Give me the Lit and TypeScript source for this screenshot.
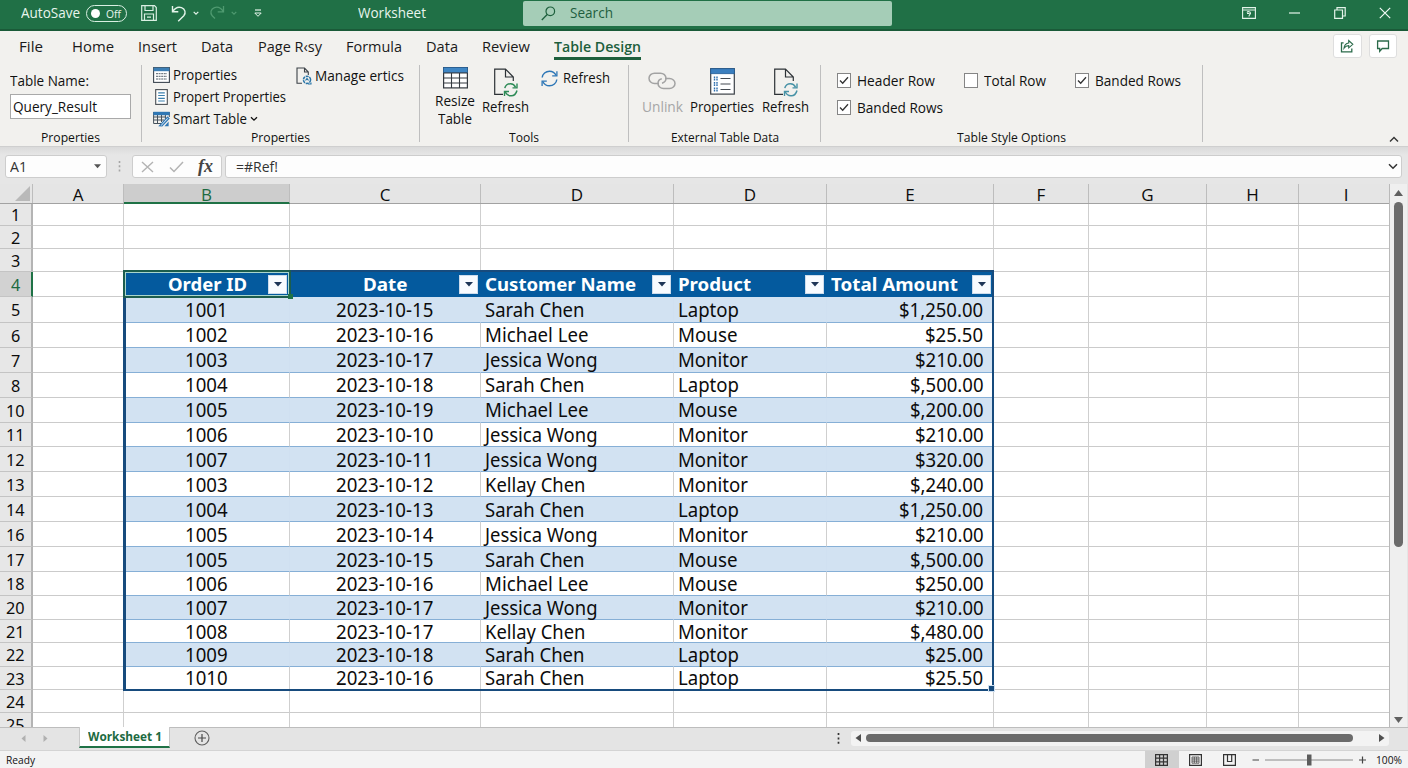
import { LitElement, html, css, svg, nothing } from "lit";
import { customElement, property, query } from "lit/decorators.js";

/** Text run condensed or widened to occupy a given width. */
@customElement("fit-text")
class FitText extends LitElement {
  @property({ type: Number }) w = 0;
  @query("span") span!: HTMLSpanElement;
  static styles = css`
    :host { display: inline-block; white-space: pre; line-height: inherit; }
    span { display: inline-block; transform-origin: 0 50%; }
  `;
  render() { return html`<span><slot></slot></span>`; }
  firstUpdated() {
    const natural = this.span.getBoundingClientRect().width;
    this.style.width = `${this.w}px`;
    this.span.style.transform = `scaleX(${this.w / natural})`;
  }
}

const t = (text: string, w: number) => html`<fit-text .w=${w}>${text}</fit-text>`;

const icon = (w: number, h: number, body: unknown, cls = "") =>
  html`<svg class="ico ${cls}" width=${w} height=${h} viewBox="0 0 ${w} ${h}" fill="none">${body}</svg>`;

const chevron = (cls = "") => icon(8, 6, svg`<path d="M1 1.2L4 4.2L7 1.2" stroke="currentColor" stroke-width="1.3"/>`, cls);
const triDown = () => icon(8, 5, svg`<path d="M0 0H8L4 4.6Z" fill="#1d3557"/>`);

const saveIcon = icon(16, 16, svg`<path d="M.7 .7H13.5L15.3 2.5V15.3H.7Z M4 .7V5.5H12V.7 M3.5 15V9H12.5V15 M6 12.2H10" stroke="#d9efe2" stroke-width="1.2"/>`);
const undoIcon = icon(16, 17, svg`<path d="M1.5 1V6.8H7.3 M1.8 6.5C4 3 7.500 1.600 10.500 2.600C14.200 4 15.200 8 12.800 10.800L7.200 16.200" stroke="#e4f4ea" stroke-width="1.4"/>`);
const redoIcon = icon(16, 17, svg`<path d="M14.5 1V6.8H8.700 M14.200 6.500C12 3 8.500 1.600 5.500 2.600C1.800 4 .8 8 3.200 10.800L6 13.500" stroke="#4f9a70" stroke-width="1.3"/>`);
const qatIcon = icon(8, 8, svg`<path d="M1 1H7" stroke="#e4f4ea" stroke-width="1.2"/><path d="M.8 4H7.200L4 7.300Z" stroke="#e4f4ea" stroke-width="1"/>`);
const searchIcon = icon(15, 15, svg`<circle cx="9.300" cy="5.300" r="4.300" stroke="#1d5f3c" stroke-width="1.200"/><path d="M6.200 8.500L.8 14" stroke="#1d5f3c" stroke-width="1.300"/>`);

const displayIcon = icon(14, 12, svg`<path d="M.6 .6H13.400V11.400H.6Z M.6 3H13.400" stroke="#e4f4ea" stroke-width="1.100"/><path d="M5 5.500C5.500 4.300 8.500 4.300 8.500 6.200C8.500 7.500 7 7.300 7 9.500 M5 6.500H7.500" stroke="#e4f4ea" stroke-width="1.100"/>`);
const minIcon = icon(11, 2, svg`<path d="M0 1H11" stroke="#e4f4ea" stroke-width="1.200"/>`);
const restoreIcon = icon(12, 12, svg`<path d="M.7 3H8.500V11.300H.7Z M3 3V.7H11.200V9H8.700" stroke="#e4f4ea" stroke-width="1.200"/>`);
const closeIcon = icon(12, 12, svg`<path d="M.8 .8L11.200 11.200M11.200 .8L.8 11.200" stroke="#f2faf5" stroke-width="1.200"/>`);

const shareIcon = icon(14, 14, svg`<path d="M3.600 3.800H1.500V12.800H11.800V9.500" stroke="#2b6b4a" stroke-width="1.300"/><path d="M4 9.200C4.300 6 6 4.300 8.700 4V1.600L12.800 5.300L8.700 8.800V6.600C6.800 6.600 5.300 7.300 4 9.200Z" stroke="#2b6b4a" stroke-width="1.100"/>`);
const commentIcon = icon(14, 14, svg`<path d="M1.600 2H12.500V9.500H6.200L3.700 12.300V9.500H1.600Z" stroke="#2b6b4a" stroke-width="1.300"/>`);

const listIcon = icon(17, 16, svg`<rect x=".6" y=".6" width="15.800" height="14.800" fill="#fff" stroke="#3c4650" stroke-width="1.100"/><rect x=".6" y=".6" width="15.800" height="3.600" fill="#3d7fb5"/><path d="M3 6.700H14 M3 9.300H14 M3 12H14" stroke="#55606a" stroke-width="1" stroke-dasharray="2 .6"/>`);
const docIcon = icon(13, 16, svg`<rect x=".7" y=".6" width="11.600" height="14.800" fill="#fff" stroke="#4a4f54" stroke-width="1.100"/><path d="M3.200 3.800H9.800 M3.200 6.500H9.800 M3.200 9.300H9.800 M3.200 12H9.800" stroke="#3c80ad" stroke-width="1.200"/>`);
const smartIcon = icon(17, 16, svg`<path d="M.6 1V12.500H8 M.6 6H13 M.6 9H11 M4.500 4V12 M8.500 4V11 M12.400 4V8 M16.300 1V6" stroke="#46525c" stroke-width="1"/><rect x=".3" y=".8" width="16.400" height="3.400" fill="#2f77b4"/><path d="M6.500 14.800L14.500 6.200L16 7.500L9 15Z" fill="#e8f2fa" stroke="#2f77b4" stroke-width="1.200"/><path d="M11.500 15.200L15.600 10.500V15.200Z" fill="#2f77b4"/>`);
const manageIcon = icon(16, 18, svg`<path d="M6 16.300H1V1H8.500L12.300 5V8 M8.500 1V5H12.300" stroke="#3c4248" stroke-width="1.100"/><circle cx="11" cy="12.800" r="3.600" stroke="#2a76a8" stroke-width="1.500" stroke-dasharray="3 .8"/><path d="M9.500 13.500L11 11.500L12.500 13.500M15 15.500V17H12" stroke="#2a76a8" stroke-width="1.100"/>`);
const gridIcon = icon(25, 22, svg`<rect x=".6" y=".6" width="23.800" height="20.300" fill="#fff" stroke="#343a40" stroke-width="1.200"/><rect x=".6" y=".6" width="23.800" height="5" fill="#3f86c4" stroke="#2a6399" stroke-width=".8"/><path d="M.6 6H24.400 M.6 11H24.400 M.6 16H24.400 M8.500 6V21 M16.500 6V21" stroke="#343a40" stroke-width="1.100"/>`);
const pageRefresh = (c: string, c2: string) => icon(26, 29, svg`<path d="M11 26.300H2.700V1.200H13.500L21.300 9V13 M13.500 1.200V9H21.300" stroke="#2d3236" stroke-width="1.200"/><path d="M12.800 20.200C13.300 17.500 15.800 15.700 18.500 15.800C21 15.900 22.700 17.500 23.600 19.300" stroke=${c} stroke-width="1.500"/><path d="M25 15.500V19.900H20.500" stroke=${c} stroke-width="1.400"/><path d="M25 22.500C24 26 21.500 28 18.800 27.800C16.300 27.700 14.300 26 13.300 24" stroke=${c2} stroke-width="1.500"/><path d="M12.500 28V23.500H17" stroke=${c2} stroke-width="1.400"/>`);
const refreshIcon = icon(17, 17, svg`<path d="M1.200 7.500C1.500 3.800 4.800 1.200 8.500 1.200C11.500 1.200 14 3 15.200 5.500" stroke="#2c76b6" stroke-width="1.400"/><path d="M15.900 1.200V5.900H11.200" stroke="#2c76b6" stroke-width="1.300"/><path d="M15.800 9.500C15.500 13.200 12.200 15.800 8.500 15.800C5.500 15.800 3 14 1.800 11.500" stroke="#2c76b6" stroke-width="1.400"/><path d="M1.100 15.900V11.100H5.800" stroke="#2c76b6" stroke-width="1.300"/>`);
const unlinkIcon = icon(28, 18, svg`<path d="M11 11.500H6.500C3.500 11.500 1 9.300 1 6.300C1 3.400 3.500 1.200 6.500 1.200H12.500C15.500 1.200 18 3.400 18 6.300C18 8.500 16.500 10.500 14 11.200" stroke="#a3a3a3" stroke-width="1.500"/><path d="M17 6.500H21.500C24.500 6.500 27 8.700 27 11.500C27 14.300 24.500 16.500 21.500 16.500H15.500C12.500 16.500 10 14.300 10 11.500C10 9.300 11.500 7.200 13.800 6.700" stroke="#a3a3a3" stroke-width="1.500"/>`);
const propsIcon = icon(25, 27, svg`<rect x=".7" y=".7" width="23.600" height="25.400" fill="#fff" stroke="#3b4147" stroke-width="1.200"/><rect x=".7" y=".7" width="23.600" height="5" fill="#3b7fbf" stroke="#265f96" stroke-width=".8"/><path d="M10.500 10.500H20.500 M10.500 16H20.500 M10.500 21.500H20.500" stroke="#444b52" stroke-width="1.200"/><path d="M4.500 8.500V12.500 M7 8.500V12.500 M4.500 14V18 M7 14V18 M4.500 19.500V23.500 M7 19.500V23.500" stroke="#2f6fae" stroke-width="1.400" stroke-dasharray="1.700 .6"/>`);

const TABS: [string, number, string][] = [
  ["File", 24, "first"], ["Home", 42, ""], ["Insert", 39, ""], ["Data", 32, ""], ["Page R‹sy", 64, ""],
  ["Formula", 56, ""], ["Data", 32, ""], ["Review", 48, ""], ["Table Design", 87, "on"],
];

const COLS: [string, number][] = [
  ["A", 91], ["B", 166], ["C", 191], ["D", 193], ["D", 153], ["E", 167], ["F", 95], ["G", 118], ["H", 92], ["I", 95],
];

const ROWS: [number, number][] = [
  [1, 22], [2, 23], [3, 23], [4, 25], [5, 26], [6, 25], [7, 25], [8, 25], [10, 25], [11, 24], [12, 25], [13, 25],
  [14, 25], [16, 25], [17, 25], [18, 24], [20, 24], [21, 23], [22, 24], [23, 23], [24, 23], [25, 23],
];

const HEAD: [string, number][] = [
  ["Order ID", 79], ["Date", 44.5], ["Customer Name", 151], ["Product", 73], ["Total Amount", 127],
];

const DATA = [
  ["1001", "2023-10-15", "Sarah Chen", "Laptop", "$1,250.00"],
  ["1002", "2023-10-16", "Michael Lee", "Mouse", "$25.50"],
  ["1003", "2023-10-17", "Jessica Wong", "Monitor", "$210.00"],
  ["1004", "2023-10-18", "Sarah Chen", "Laptop", "$,500.00"],
  ["1005", "2023-10-19", "Michael Lee", "Mouse", "$,200.00"],
  ["1006", "2023-10-10", "Jessica Wong", "Monitor", "$210.00"],
  ["1007", "2023-10-11", "Jessica Wong", "Monitor", "$320.00"],
  ["1003", "2023-10-12", "Kellay Chen", "Monitor", "$,240.00"],
  ["1004", "2023-10-13", "Sarah Chen", "Laptop", "$1,250.00"],
  ["1005", "2023-10-14", "Jessica Wong", "Monitor", "$210.00"],
  ["1005", "2023-10-15", "Sarah Chen", "Mouse", "$,500.00"],
  ["1006", "2023-10-16", "Michael Lee", "Mouse", "$250.00"],
  ["1007", "2023-10-17", "Jessica Wong", "Monitor", "$210.00"],
  ["1008", "2023-10-17", "Kellay Chen", "Monitor", "$,480.00"],
  ["1009", "2023-10-18", "Sarah Chen", "Laptop", "$25.00"],
  ["1010", "2023-10-16", "Sarah Chen", "Laptop", "$25.50"],
];

const WIDTHS: Record<string, number> = {
  "Sarah Chen": 99.5, "Michael Lee": 103.500, "Jessica Wong": 112.500, "Kellay Chen": 100.500, Laptop: 61, Mouse: 59.500, Monitor: 70,
};
const widthOf = (s: string) =>
  WIDTHS[s] ?? [...s].reduce((sum, ch) => sum + (ch === "-" ? 6.1 : ch === "," || ch === "." ? 4.8 : 10.65), 0);

@customElement("sheet-grid")
class SheetGrid extends LitElement {
  static styles = css`
    :host { display: block; position: relative; overflow: hidden; background: #fff; color: #0c0c0c; }
    * { box-sizing: border-box; }
    .heads { display: flex; height: 20px; background: #e5e5e5; border-bottom: 1px solid #a2a2a2; }
    .heads > div { display: flex; align-items: center; justify-content: center; border-right: 1px solid #bdbdbd; font: 17px/18px "Open Sans", sans-serif; padding-top: 2px; flex: none; }
    .heads .corner { width: 33px; justify-content: flex-end; align-items: flex-end; padding: 0 2px 2px 0; }
    .heads .sel { background: #cdcdcd; color: #1d6a41; border-bottom: 2px solid #1f7246; height: 20px; padding-top: 3px; }
    .row { display: flex; flex: none; }
    .num { width: 33px; flex: none; background: #e7e7e7; border-right: 2px solid #b4b4b4; border-bottom: 1px solid #c4c4c4; display: flex; align-items: center; justify-content: center; font: 17px/18px "Noto Sans", sans-serif; padding: 1px 0 0 0; }
    .num.sel { background: #d2d2d2; color: #1d6a41; border-right-color: #1f7246; }
    .cell { flex: none; border-right: 1px solid #cfcfcf; border-bottom: 1px solid #cbcbcb; display: flex; align-items: center; font: 19.300px/18px "Noto Sans", sans-serif; }
    .tbl { border-bottom-color: #86afd6; }
    .low { padding-top: 1.500px; }
    .band { background: #d2e2f2; border-right-color: #d0e0f1; }
    .mid { justify-content: center; }
    .left { padding-left: 3.500px; }
    .right { justify-content: flex-end; padding-right: 9.500px; }
    .hd { background: #045a9e; border-color: #045a9e; color: #fff; font-weight: 700; font-size: 18.500px; }
    .hd.mid { padding-left: 22px; }
    .lab { flex: 1; display: flex; }
    .mid .lab { justify-content: center; }
    .filter { width: 19px; height: 19px; margin-right: 2px; background: #f8fbff; border: 1px solid #cddcec; display: flex; align-items: center; justify-content: center; flex: none; }
    .outline { position: absolute; left: 122.500px; top: 86px; width: 871.500px; height: 421px; border: 2.500px solid #174b7d; border-width: 2px 2px 2px 3px; pointer-events: none; }
    .active { position: absolute; left: 123px; top: 86px; width: 168px; height: 28px; border: 2px solid #1c5d4d; box-shadow: inset 0 0 0 1px #a9d5cc; }
    .knob { position: absolute; width: 5px; height: 5px; background: #1f7246; left: 288px; top: 110px; }
    .knob.end { background: #174b7d; left: 989px; top: 502px; box-shadow: 0 0 0 1px #cfe0f1; }
    svg { display: block; flex: none; }
  `;

  private cell(col: number, row: number) {
    const width = COLS[col][1];
    const c = col - 1;
    const r = row - 3;
    const inTable = c >= 0 && c < 5 && r >= 0 && r <= 16;
    const style = `width:${width}px`;
    if (!inTable) return html`<div class="cell" style=${style}></div>`;
    const align = c < 2 ? "mid" : c < 4 || r === 0 ? "left" : "right";
    if (r === 0)
      return html`<div class="cell hd ${align}" style=${style}>
        <div class="lab">${t(HEAD[c][0], HEAD[c][1])}</div><div class="filter">${triDown()}</div></div>`;
    const text = DATA[r - 1][c];
    const low = (r >= 7 && r <= 12) || r === 14;
    return html`<div class="cell tbl ${align} ${r % 2 ? "band" : ""} ${low ? "low" : ""}" style=${style}>${t(text, widthOf(text))}</div>`;
  }

  render() {
    return html`
      <div class="heads">
        <div class="corner">${icon(15, 15, svg`<path d="M15 0V15H0Z" fill="#b9b9b9"/>`)}</div>
        ${COLS.map(([name, w], i) => html`<div class=${i === 1 ? "sel" : ""} style="width:${w}px">${name}</div>`)}
      </div>
      ${ROWS.map(([n, h], r) => html`<div class="row" style="height:${h}px">
        <div class="num ${n === 4 ? "sel" : ""}">${t(String(n), n > 9 ? 18.6 : 9.300)}</div>
        ${COLS.map((_, c) => this.cell(c, r))}
      </div>`)}
      <div class="outline"></div>
      <div class="active"></div>
      <div class="knob"></div>
      <div class="knob end"></div>
    `;
  }
}

@customElement("app-root")
class AppRoot extends LitElement {
  static styles = css`
    :host { display: flex; flex-direction: column; width: 1408px; height: 768px; overflow: hidden; background: #e5e5e5; color: #111; font: 14px/18px "Open Sans", "Noto Sans", sans-serif; }
    * { box-sizing: border-box; }
    svg { display: block; flex: none; }
    .title { height: 31px; flex: none; background: #207046; border-bottom: 2px solid #1a5a38; display: flex; align-items: center; padding: 0 17px 3px 21px; color: #e8f5ed; font-size: 14px; }
    .toggle { width: 41px; height: 17px; border: 1.200px solid #d9efe2; border-radius: 9px; margin-left: 6px; display: flex; align-items: center; padding: 0 5px 0 4px; justify-content: space-between; font-size: 11px; line-height: 15px; }
    .toggle i { width: 9px; height: 9px; border-radius: 50%; background: #fff; }
    .save { margin-left: 14px; } .undo { margin-left: 14px; } .u2 { margin-left: 6px; } .redo { margin-left: 10px; }
    .faint { color: #4f9a70; } .qat { margin-left: 17px; }
    .doc { margin-left: 96px; }
    .search { width: 369px; height: 25px; margin-left: 97px; background: #a5cdb7; border-radius: 2px; display: flex; align-items: center; padding-left: 18px; gap: 14px; color: #1f5e3e; }
    .win { margin-left: auto; display: flex; align-items: center; gap: 33.500px; }
    .tabs { height: 29px; flex: none; background: #f2f1ee; display: flex; padding: 5px 11px 0 19px; gap: 24.150px; font-size: 14.800px; line-height: 21px; color: #1a1a1a; }
    .tab { height: 24px; } .first { width: 29px; }
    .on { color: #1d5f3c; font-weight: 600; border-bottom: 3px solid #1d5f3c; height: 24px; }
    .btns { margin-left: auto; display: flex; gap: 7px; margin-top: -2px; }
    .sq { width: 28.500px; height: 24px; background: #fff; border: 1px solid #dedede; border-radius: 3px; display: flex; align-items: center; justify-content: center; }
    .ribbon { height: 87px; flex: none; background: #f2f1ee; border-bottom: 1px solid #cfcfcf; display: flex; padding-top: 5px; }
    .grp { border-right: 1px solid #bfbfbf; height: 77px; display: flex; flex-direction: column; }
    .body { height: 65px; flex: none; display: flex; align-items: flex-start; }
    .cap { font-size: 12.500px; line-height: 15px; text-align: center; }
    .g1 { width: 142px; } .g2 { width: 278px; } .g3 { width: 209px; } .g4 { width: 192px; } .g5 { width: 382px; }
    .col { display: flex; flex-direction: column; }
    .g1 .col { padding: 7px 0 0 10px; gap: 4px; }
    .field { width: 121px; height: 25px; border: 1px solid #a9a9a9; background: #fff; padding: 3px 0 0 2px; }
    .line { display: flex; align-items: center; height: 22px; gap: 4px; }
    .line .ib { width: 17px; display: flex; justify-content: center; }
    .g2 .col { padding: 0 0 0 11px; margin-top: -1px; width: 154px; }
    .g2 .col .line { gap: 3px; }
    .manage { margin-top: 0; }
    .g2 .manage { gap: 3px; }
    .big { display: flex; flex-direction: column; align-items: center; flex: none; }
    .resize { margin: 2px 0 0 13px; width: 44px; gap: 3px; text-align: center; }
    .refresh { margin: 3px 0 0 4px; width: 48px; gap: 1px; }
    .mini { margin: 2px 0 0 12px; gap: 5px; }
    .unlink { margin: 7px 0 0 12px; width: 42px; gap: 8px; color: #a6a6a6; }
    .prop { margin: 3px 0 0 6px; width: 66px; gap: 3px; }
    .ref2 { margin: 3px 0 0 6px; width: 48px; gap: 1px; }
    .checks { display: grid; grid-template-columns: 127px 111px 120px; grid-auto-rows: 27px; padding: 2px 0 0 16px; }
    .chk { display: flex; align-items: center; gap: 6px; }
    .box { width: 14px; height: 15px; border: 1px solid #858585; background: #fff; display: flex; align-items: center; justify-content: center; }
    .fold { margin-left: auto; align-self: flex-end; padding: 0 9px 3px 0; }
    .fbar { height: 37px; flex: none; display: flex; padding: 8px 6px 0 5px; background: linear-gradient(#dadada, #e6e6e6 8px); }
    .inp { height: 23px; background: #fdfdfd; border: 1px solid #cdcdcd; border-radius: 3px; display: flex; align-items: center; color: #333; }
    .name { width: 102px; padding: 0 5px 0 4px; justify-content: space-between; }
    .dots { width: 25px; display: flex; justify-content: center; padding-top: 6px; }
    .fx { width: 90px; padding: 0 8px; justify-content: space-between; margin-right: 3px; }
    .fxt { font: italic 700 18px/18px "Liberation Serif", serif; color: #444; padding-bottom: 2px; }
    .formula { flex: 1; padding: 0 3px 0 10px; justify-content: space-between; }
    .main { height: 543px; flex: none; display: flex; }
    sheet-grid { width: 1390px; border-right: 1px solid #b9b9b9; }
    .vbar { width: 17px; background: #efefef; display: flex; flex-direction: column; align-items: center; padding: 6px 1px 4px 0; }
    .vthumb { width: 9px; height: 345px; border-radius: 5px; background: #6b6b6b; margin: 6px 0 auto; }
    .foot { height: 23px; flex: none; border-top: 1px solid #bdbdbd; background: #e4e4e4; display: flex; align-items: center; padding: 0 19px 2px 0; }
    .nav { width: 79px; padding-left: 21px; gap: 17px; display: flex; }
    .sheet { width: 91px; height: 21px; margin: -1px 0 0; align-self: flex-start; border: 1px solid #c8c8c8; border-top: 0; border-bottom: 2px solid #1f7246; background: #fff; color: #1d6a41; font-weight: 700; font-size: 13px; text-align: center; line-height: 19px; }
    .plus { margin-left: 24px; margin-right: auto; }
    .hbar { width: 538px; height: 15px; background: #f3f3f3; margin-left: 11px; display: flex; align-items: center; padding: 0 4px; border-radius: 3px; }
    .hthumb { width: 487px; height: 8px; border-radius: 4px; background: #6b6b6b; margin: 0 auto 0 5px; }
    .status { height: 18px; flex: none; border-top: 1px solid #d4d4d4; background: #f3f3f3; display: flex; align-items: center; padding: 0 6px; font-size: 11.500px; }
    .views { margin-left: auto; display: flex; align-items: center; align-self: stretch; }
    .view { width: 34px; height: 18px; display: flex; align-items: center; justify-content: center; padding-right: 1px; }
    .view.cur { background: #d0d0d0; }
    .zoom { display: flex; align-items: center; margin-left: 5px; }
    .pct { margin-left: 10px; display: flex; }
  `;

  private check(label: string, w: number, on: boolean) {
    return html`<div class="chk"><span class="box">${on ? icon(10, 9, svg`<path d="M1 4.500L3.700 7.300L9 1.300" stroke="#333" stroke-width="1.300"/>`) : nothing}</span>${t(label, w)}</div>`;
  }

  render() {
    return html`
      <div class="title">
        ${t("AutoSave", 59)}
        <div class="toggle"><i></i>${t("Off", 15)}</div>
        <div class="save">${saveIcon}</div>
        <div class="undo">${undoIcon}</div><div class="u2">${icon(6, 5, svg`<path d="M.7 .8L3 3.200L5.300 .8" stroke="#e4f4ea" stroke-width="1.200"/>`)}</div>
        <div class="redo faint">${redoIcon}</div><div class="u2">${icon(6, 5, svg`<path d="M.7 .8L3 3.200L5.300 .8" stroke="#4f9a70" stroke-width="1.200"/>`)}</div>
        <div class="qat">${qatIcon}</div>
        <div class="doc">${t("Worksheet", 68)}</div>
        <div class="search">${searchIcon}${t("Search", 43)}</div>
        <div class="win">${displayIcon}${minIcon}${restoreIcon}${closeIcon}</div>
      </div>
      <div class="tabs">
        ${TABS.map(([n, w, c]) => html`<div class="tab ${c}">${t(n, w)}</div>`)}
        <div class="btns"><div class="sq">${shareIcon}</div><div class="sq">${commentIcon}</div></div>
      </div>
      <div class="ribbon">
        <div class="grp g1">
          <div class="body"><div class="col"><div>${t("Table Name:", 79)}</div><div class="field">${t("Query_Result", 84)}</div></div></div>
          <div class="cap">${t("Properties", 59)}</div>
        </div>
        <div class="grp g2">
          <div class="body">
            <div class="col">
              <div class="line"><span class="ib">${listIcon}</span>${t("Properties", 64)}</div>
              <div class="line"><span class="ib">${docIcon}</span>${t("Propert Properties", 113)}</div>
              <div class="line"><span class="ib">${smartIcon}</span>${t("Smart Table", 74)}${chevron()}</div>
            </div>
            <div class="line manage">${manageIcon}${t("Manage ertics", 89)}</div>
          </div>
          <div class="cap">${t("Properties", 59)}</div>
        </div>
        <div class="grp g3">
          <div class="body">
            <div class="big resize">${gridIcon}<div>${t("Resize", 40)}<br>${t("Table", 34)}</div></div>
            <div class="big refresh">${pageRefresh("#2e8b57", "#2e8b57")}<div>${t("Refresh", 47)}</div></div>
            <div class="line mini">${refreshIcon}${t("Refresh", 47)}</div>
          </div>
          <div class="cap">${t("Tools", 30)}</div>
        </div>
        <div class="grp g4">
          <div class="body">
            <div class="big unlink">${unlinkIcon}<div>${t("Unlink", 41)}</div></div>
            <div class="big prop">${propsIcon}<div>${t("Properties", 64)}</div></div>
            <div class="big ref2">${pageRefresh("#4792a6", "#4792a6")}<div>${t("Refresh", 47)}</div></div>
          </div>
          <div class="cap">${t("External Table Data", 108)}</div>
        </div>
        <div class="grp g5">
          <div class="body"><div class="checks">
            ${this.check("Header Row", 78, true)}${this.check("Total Row", 62, false)}${this.check("Banded Rows", 86, true)}${this.check("Banded Rows", 86, true)}
          </div></div>
          <div class="cap">${t("Table Style Options", 109)}</div>
        </div>
        <div class="fold">${icon(10, 7, svg`<path d="M1 5.500L5 1.500L9 5.500" stroke="#333" stroke-width="1.400"/>`)}</div>
      </div>
      <div class="fbar">
        <div class="inp name">${t("A1", 17)}${icon(7, 5, svg`<path d="M0 .3H7L3.500 4.300Z" fill="#555"/>`)}</div>
        <div class="dots">${icon(3, 11, svg`<path d="M1.500 0V2M1.500 4.200V6.200M1.500 8.500V10.500" stroke="#a5a5a5" stroke-width="1.600"/>`)}</div>
        <div class="inp fx">
          ${icon(13, 12, svg`<path d="M1 1L12 11M12 1L1 11" stroke="#b3b3b3" stroke-width="1.400"/>`)}
          ${icon(15, 12, svg`<path d="M1 6.500L5 10.500L14 1" stroke="#b3b3b3" stroke-width="1.500"/>`)}
          <span class="fxt">fx</span>
        </div>
        <div class="inp formula">${t("=#Ref!", 42)}${icon(10, 7, svg`<path d="M1 1.200L5 5.200L9 1.200" stroke="#333" stroke-width="1.500"/>`)}</div>
      </div>
      <div class="main">
        <sheet-grid></sheet-grid>
        <div class="vbar">
          ${icon(9, 6, svg`<path d="M0 6L4.500 0L9 6Z" fill="#606060"/>`)}
          <div class="vthumb"></div>
          ${icon(9, 6, svg`<path d="M0 0H9L4.500 6Z" fill="#606060"/>`)}
        </div>
      </div>
      <div class="foot">
        <div class="nav">${icon(5, 7, svg`<path d="M4.500 0V7L.5 3.500Z" fill="#b0b0b0"/>`)}${icon(5, 7, svg`<path d="M.5 0V7L4.500 3.500Z" fill="#b0b0b0"/>`)}</div>
        <div class="sheet">${t("Worksheet 1", 74)}</div>
        <div class="plus">${icon(16, 16, svg`<circle cx="8" cy="8" r="7" stroke="#5f5f5f" stroke-width="1.100"/><path d="M8 4V12M4 8H12" stroke="#4a4a4a" stroke-width="1.200"/>`)}</div>
        ${icon(3, 11, svg`<path d="M1.500 0V2M1.500 4.400V6.400M1.500 8.800V10.800" stroke="#333" stroke-width="1.700"/>`)}
        <div class="hbar">
          ${icon(6, 8, svg`<path d="M6 0V8L.5 4Z" fill="#505050"/>`)}
          <div class="hthumb"></div>
          ${icon(6, 8, svg`<path d="M0 0V8L5.500 4Z" fill="#505050"/>`)}
        </div>
      </div>
      <div class="status">
        ${t("Ready", 29)}
        <div class="views">
          <div class="view cur">${icon(13, 12, svg`<path d="M.6 .6H12.400V11.400H.6ZM4.600 .6V11.400M8.500 .6V11.400M.6 4.200H12.400M.6 7.800H12.400" stroke="#333" stroke-width="1.200"/>`)}</div>
          <div class="view">${icon(13, 12, svg`<path d="M.6 .6H12.400V11.400H.6Z" stroke="#333" stroke-width="1.200"/><path d="M3 3H10V9.200H3Z M3 5H10M3 7.100H10M5.300 3V9M7.700 3V9" stroke="#444" stroke-width=".8"/>`)}</div>
          <div class="view">${icon(13, 12, svg`<path d="M.6 .6H12.400V11.400H.6Z M4.500 .6V7.500H8.700V.6" stroke="#333" stroke-width="1.200"/>`)}</div>
        </div>
        <div class="zoom">
          ${icon(114, 12, svg`<path d="M.5 6H7M107 6H114M110.500 2.500V9.500" stroke="#444" stroke-width="1.200"/><path d="M13 6H101" stroke="#8a8a8a" stroke-width="1"/><rect x="55" y=".5" width="4.500" height="11" fill="#5c5c5c"/>`)}
          <div class="pct">${t("100%", 26)}</div>
        </div>
      </div>
    `;
  }
}
